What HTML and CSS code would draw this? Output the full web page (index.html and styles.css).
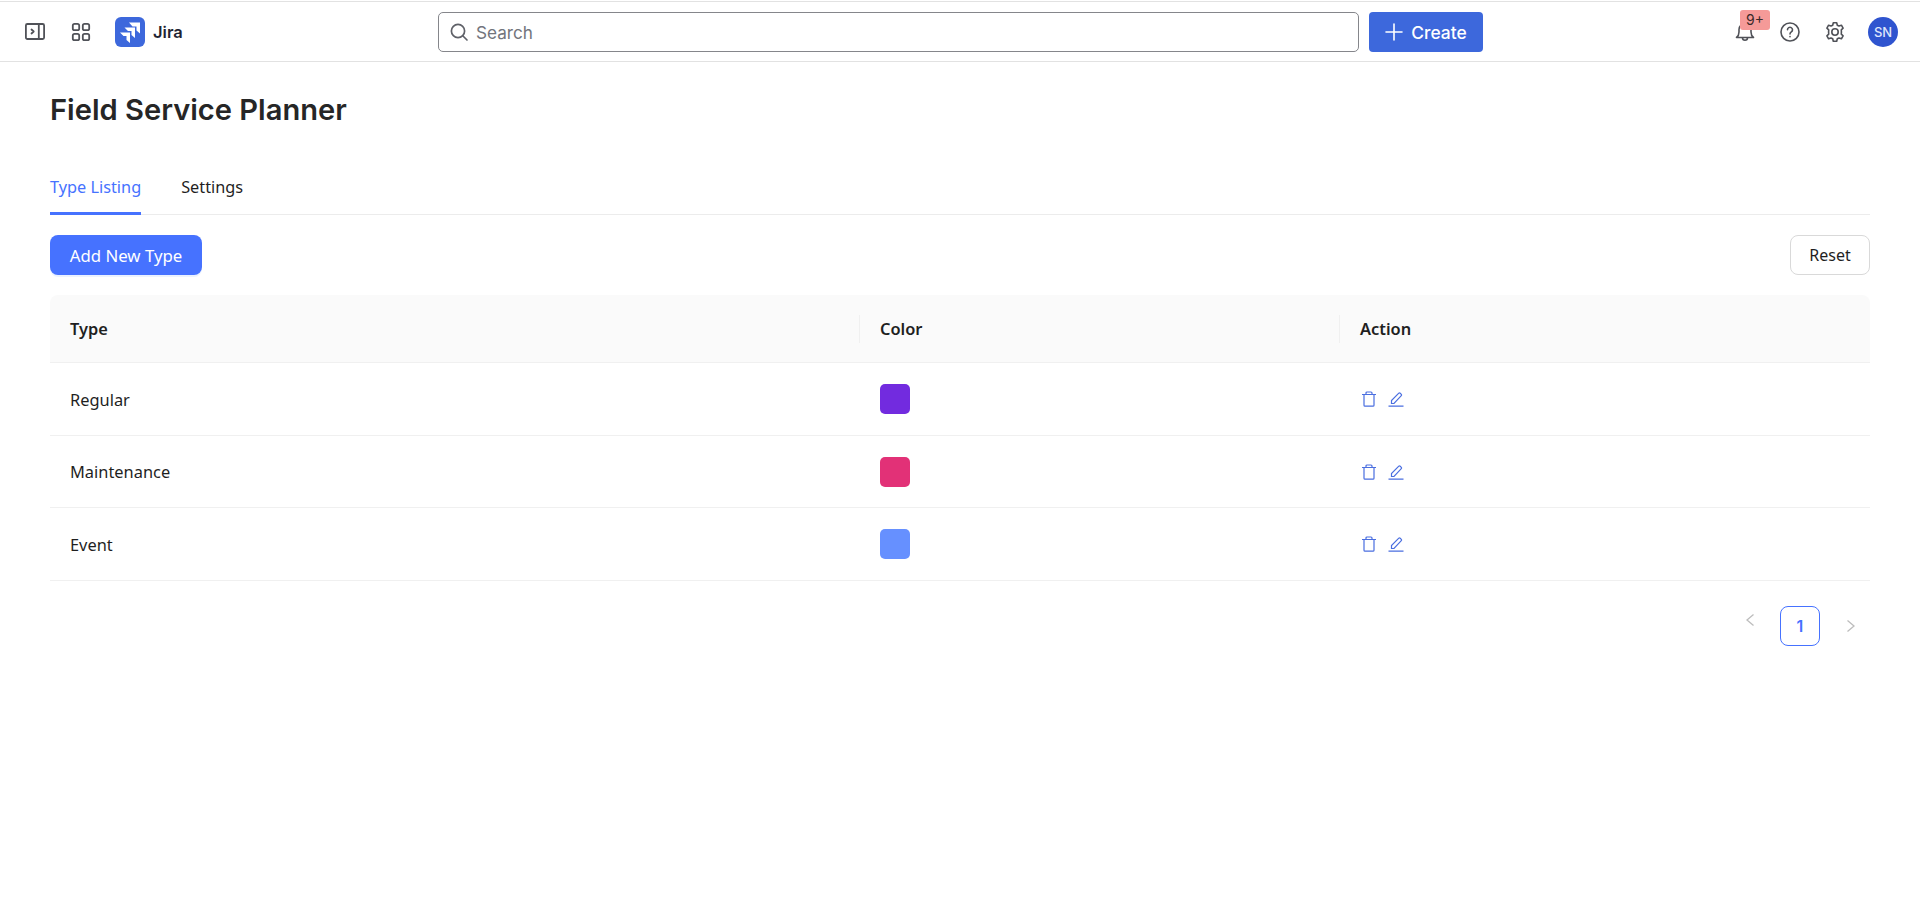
FILE: index.html
```html
<!DOCTYPE html>
<html lang="en">
<head>
  <meta charset="UTF-8">
  <title>Field Service Planner</title>
  <link rel="stylesheet" href="styles.css">
</head>
<body>

<header class="topbar">
  <div class="top-left">
    <svg class="icon-btn" width="20" height="20" viewBox="0 0 20 20" fill="none" stroke="#505258" stroke-width="1.8">
      <rect x="0.9" y="2" width="18.2" height="15" rx="1.5"/>
      <path d="M13.8 2v15"/>
      <path d="M6.5 7.5l2.2 2-2.2 2" stroke-linecap="round" stroke-linejoin="round"/>
    </svg>
    <svg class="icon-btn" width="20" height="20" viewBox="0 0 20 20" fill="none" stroke="#505258" stroke-width="1.8">
      <rect x="1.8" y="1.8" width="6.4" height="6.4" rx="1.8"/>
      <rect x="11.8" y="1.8" width="6.4" height="6.4" rx="1.8"/>
      <rect x="1.8" y="11.8" width="6.4" height="6.4" rx="1.8"/>
      <rect x="11.8" y="11.8" width="6.4" height="6.4" rx="1.8"/>
    </svg>
    <div class="brand">
      <svg class="brand-logo" width="30" height="30" viewBox="0 0 30 30">
        <rect width="30" height="30" rx="6" fill="#3d68dc"/>
        <path d="M14 5.500H25V16.500L21.500 13.500V9.500H17.500Z" fill="#fff"/>
        <path d="M9.500 10.500H20V21L16.500 18V14H13Z" fill="#fff"/>
        <path d="M5 15.500H15V26L11.500 23V19H8.500Z" fill="#fff"/>
      </svg>
      <span class="brand-name">Jira</span>
    </div>
  </div>

  <div class="top-center">
    <div class="search">
      <svg width="20" height="20" viewBox="0 0 20 20" fill="none" stroke="#5f6168" stroke-width="1.700" stroke-linecap="round">
        <circle cx="9" cy="9" r="6.600"/>
        <path d="M14 14l4 4"/>
      </svg>
      <span>Search</span>
    </div>
    <button class="create-btn">
      <svg width="18" height="18" viewBox="0 0 18 18" stroke="#fff" stroke-width="1.600" stroke-linecap="round">
        <path d="M9 1v16M1 9h16"/>
      </svg>
      Create
    </button>
  </div>

  <div class="top-right">
    <div class="bell">
      <svg width="20" height="20" viewBox="0 0 20 20" fill="none" stroke="#505258" stroke-width="1.600" stroke-linejoin="round">
        <path d="M1.500 15.500c1.700-1.300 2.500-3 2.500-5.500V7.500a6 6 0 0 1 12 0V10c0 2.500.8 4.200 2.500 5.500z"/>
        <path d="M7.500 15.800a2.500 2.500 0 0 0 5 0"/>
      </svg>
      <span class="badge">9+</span>
    </div>
    <svg width="20" height="20" viewBox="0 0 20 20" fill="none" stroke="#505258" stroke-width="1.600" stroke-linecap="round">
      <circle cx="10" cy="10" r="9"/>
      <path d="M7.500 7.800a2.500 2.500 0 1 1 3.800 2.100c-.9.600-1.300 1-1.300 2"/>
      <path d="M10 14.600v.1"/>
    </svg>
    <svg width="20" height="20" viewBox="2 2 20 20" fill="none" stroke="#505258" stroke-width="1.600" stroke-linejoin="round">
      <path d="M10.300 2.800h3.400l.6 2.400 1.700.8 2.400-.8 1.700 2.900-1.800 1.700.1 2.200-.1 2.200 1.800 1.700-1.700 2.900-2.400-.8-1.700.8-.6 2.400h-3.400l-.6-2.400-1.700-.8-2.400.8-1.700-2.900 1.800-1.700-.1-2.200.1-2.200-1.800-1.700 1.700-2.900 2.400.8 1.700-.8z"/>
      <circle cx="12" cy="12" r="3.200"/>
    </svg>
    <div class="avatar">SN</div>
  </div>
</header>

<main class="content">
  <h1 class="page-title">Field Service Planner</h1>

  <nav class="tabs">
    <a class="tab active">Type Listing</a>
    <a class="tab">Settings</a>
  </nav>

  <div class="toolbar">
    <button class="btn-primary">Add New Type</button>
    <button class="btn-default">Reset</button>
  </div>

  <table class="type-table">
    <colgroup>
      <col class="col-type">
      <col class="col-color">
      <col>
    </colgroup>
    <thead>
      <tr>
        <th>Type</th>
        <th>Color</th>
        <th>Action</th>
      </tr>
    </thead>
    <tbody>
      <tr>
        <td>Regular</td>
        <td><div class="swatch swatch-regular"></div></td>
        <td>
          <div class="actions">
            <svg width="16" height="16" viewBox="0 0 16 16" fill="none" stroke="#4a6ee0" stroke-width="1.200"><path d="M1 3.500h14M3 3.500v10.700a1 1 0 0 0 1 1h8a1 1 0 0 0 1-1V3.500M5 3.500V2a1 1 0 0 1 1-1h4a1 1 0 0 1 1 1v1.500"/></svg>
            <svg width="16" height="16" viewBox="0 0 16 16" fill="none" stroke="#4a6ee0" stroke-width="1.200"><path d="M3.500 12.500v-3L10.800 2.200a1 1 0 0 1 1.400 0l1.100 1.100a1 1 0 0 1 0 1.400L6 12.500zM.5 15.200h15"/></svg>
          </div>
        </td>
      </tr>
      <tr>
        <td>Maintenance</td>
        <td><div class="swatch swatch-maintenance"></div></td>
        <td>
          <div class="actions">
            <svg width="16" height="16" viewBox="0 0 16 16" fill="none" stroke="#4a6ee0" stroke-width="1.200"><path d="M1 3.500h14M3 3.500v10.700a1 1 0 0 0 1 1h8a1 1 0 0 0 1-1V3.500M5 3.500V2a1 1 0 0 1 1-1h4a1 1 0 0 1 1 1v1.500"/></svg>
            <svg width="16" height="16" viewBox="0 0 16 16" fill="none" stroke="#4a6ee0" stroke-width="1.200"><path d="M3.500 12.500v-3L10.800 2.200a1 1 0 0 1 1.400 0l1.100 1.100a1 1 0 0 1 0 1.400L6 12.500zM.5 15.200h15"/></svg>
          </div>
        </td>
      </tr>
      <tr>
        <td>Event</td>
        <td><div class="swatch swatch-event"></div></td>
        <td>
          <div class="actions">
            <svg width="16" height="16" viewBox="0 0 16 16" fill="none" stroke="#4a6ee0" stroke-width="1.200"><path d="M1 3.500h14M3 3.500v10.700a1 1 0 0 0 1 1h8a1 1 0 0 0 1-1V3.500M5 3.500V2a1 1 0 0 1 1-1h4a1 1 0 0 1 1 1v1.500"/></svg>
            <svg width="16" height="16" viewBox="0 0 16 16" fill="none" stroke="#4a6ee0" stroke-width="1.200"><path d="M3.500 12.500v-3L10.800 2.200a1 1 0 0 1 1.400 0l1.100 1.100a1 1 0 0 1 0 1.400L6 12.500zM.5 15.200h15"/></svg>
          </div>
        </td>
      </tr>
    </tbody>
  </table>

  <div class="pagination">
    <svg class="page-prev" width="12" height="14" viewBox="0 0 12 14" fill="none" stroke="#bdbdbd" stroke-width="1.300"><path d="M9.500 1.500L3 7l6.500 5.500"/></svg>
    <div class="page-num">1</div>
    <svg class="page-next" width="12" height="14" viewBox="0 0 12 14" fill="none" stroke="#bdbdbd" stroke-width="1.300"><path d="M2.500 1.500L9 7l-6.500 5.500"/></svg>
  </div>
</main>

</body>
</html>
```

FILE: styles.css
```css
* {
  box-sizing: border-box;
}
html, body {
  height: 100%;
}
body {
  margin: 0;
  background: #fff;
  color: #1f1f1f;
  font-family: "Noto Sans", "Open Sans", sans-serif;
  font-size: 15px;
  overflow: hidden;
}
button {
  font-family: inherit;
  cursor: pointer;
}

/* top bar */
.topbar {
  height: 61px;
  margin-top: 1px;
  border-top: 1px solid #e2e2e2;
  border-bottom: 1px solid #e2e2e2;
  display: flex;
  align-items: center;
  font-family: Inter, sans-serif;
  position: relative;
}
.top-left {
  display: flex;
  align-items: center;
  padding-left: 25px;
}
.icon-btn {
  margin-right: 26px;
}
.icon-btn + .icon-btn {
  margin-right: 24px;
}
.brand {
  display: flex;
  align-items: center;
  gap: 8px;
}
.brand-name {
  font-size: 16.500px;
  font-weight: 600;
  color: #1f2433;
}
.top-center {
  position: absolute;
  left: 438px;
  top: 10px;
  display: flex;
  gap: 10px;
}
.search {
  width: 921px;
  height: 40px;
  border: 1px solid #85868b;
  border-radius: 5px;
  display: flex;
  align-items: center;
  gap: 7px;
  padding-left: 10px;
  color: #72757d;
  font-size: 17.200px;
}
.create-btn {
  width: 114px;
  height: 40px;
  border: 0;
  border-radius: 4px;
  background: #3d68dc;
  color: #fff;
  font-family: Inter, sans-serif;
  font-size: 17.400px;
  font-weight: 500;
  display: flex;
  align-items: center;
  justify-content: center;
  gap: 8px;
}
.top-right {
  margin-left: auto;
  padding-right: 22px;
  display: flex;
  align-items: center;
  gap: 25px;
}
.bell {
  position: relative;
  width: 20px;
  height: 20px;
}
.badge {
  position: absolute;
  left: 5px;
  top: -12px;
  width: 30px;
  height: 20px;
  background: #f59a98;
  border-radius: 3px;
  font-size: 14px;
  line-height: 19px;
  text-align: center;
  color: #3a2a2a;
}
.avatar {
  width: 30px;
  height: 30px;
  margin-left: -2px;
  border-radius: 50%;
  background: #2f54cf;
  color: #dfe6fb;
  font-size: 13px;
  font-weight: 500;
  display: flex;
  align-items: center;
  justify-content: center;
}

/* page */
.content {
  padding: 0 50px;
}
.page-title {
  margin: 29px 0 0;
  font-family: Inter, sans-serif;
  font-size: 29.100px;
  line-height: 38px;
  font-weight: 600;
  color: #262626;
}
.tabs {
  margin-top: 37px;
  height: 49px;
  display: flex;
  gap: 40px;
  border-bottom: 1px solid #ececec;
}
.tab {
  height: 49px;
  line-height: 42px;
  font-size: 16.300px;
  color: #1f1f1f;
}
.tab.active {
  color: #4672ff;
  border-bottom: 3px solid #4672ff;
}
.toolbar {
  margin-top: 20px;
  display: flex;
  justify-content: space-between;
}
.btn-primary {
  width: 152px;
  height: 40px;
  border: 0;
  border-radius: 8px;
  background: #4672ff;
  color: #fff;
  font-size: 16.800px;
  box-shadow: 0 2px 0 rgba(5, 95, 255, .08);
}
.btn-default {
  width: 80px;
  height: 40px;
  border: 1px solid #d9d9d9;
  border-radius: 8px;
  background: #fff;
  color: #1f1f1f;
  font-size: 16px;
}

/* table */
.type-table {
  margin-top: 20px;
  width: 100%;
  border-collapse: separate;
  border-spacing: 0;
  table-layout: fixed;
}
.col-type {
  width: 810px;
}
.col-color {
  width: 480px;
}
.type-table th {
  height: 68px;
  background: #fafafa;
  border-bottom: 1px solid #f0f0f0;
  padding: 0 20px;
  text-align: left;
  font-size: 16.400px;
  font-weight: 600;
  position: relative;
}
.type-table th:first-child {
  border-top-left-radius: 8px;
}
.type-table th:last-child {
  border-top-right-radius: 8px;
}
.type-table th + th::before {
  content: "";
  position: absolute;
  left: -1px;
  top: 20px;
  width: 1px;
  height: 28px;
  background: #f0f0f0;
}
.type-table td {
  height: 72.500px;
  border-bottom: 1px solid #f0f0f0;
  padding: 1px 20px 0;
  font-size: 16.400px;
}
.swatch {
  width: 30px;
  height: 30px;
  border-radius: 5px;
}
.swatch-regular {
  background: #722bdf;
}
.swatch-maintenance {
  background: #e23177;
}
.swatch-event {
  background: #6690ff;
}
.actions {
  display: flex;
  gap: 11px;
  align-items: center;
  padding-left: 1px;
}

/* pagination */
.pagination {
  margin-top: 25px;
  display: flex;
  justify-content: flex-end;
  align-items: center;
  gap: 24px;
  padding-right: 13px;
}
.page-prev {
  margin-top: -12px;
}
.page-next {
  margin-left: 1px;
}
.page-num {
  width: 40px;
  height: 40px;
  border: 1px solid #4672ff;
  border-radius: 8px;
  color: #4672ff;
  font-family: Inter, sans-serif;
  font-size: 16px;
  font-weight: 600;
  display: flex;
  align-items: center;
  justify-content: center;
}
```
